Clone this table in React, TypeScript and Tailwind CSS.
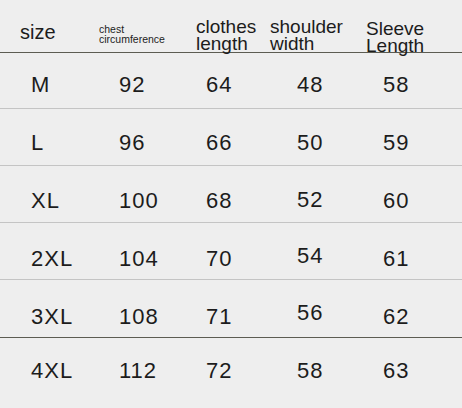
const rows = [
  { size: "M", chest: "92", length: "64", shoulder: "48", sleeve: "58", row: "h-[56px] pt-[21px] border-[#c4c4c4]", lift: "" },
  { size: "L", chest: "96", length: "66", shoulder: "50", sleeve: "59", row: "h-[57px] pt-[23px] border-[#c4c4c4]", lift: "" },
  { size: "XL", chest: "100", length: "68", shoulder: "52", sleeve: "60", row: "h-[57px] pt-[24px] border-[#c4c4c4]", lift: "-mt-[1px]" },
  { size: "2XL", chest: "104", length: "70", shoulder: "54", sleeve: "61", row: "h-[57px] pt-[25px] border-[#c4c4c4]", lift: "-mt-[3px]" },
  { size: "3XL", chest: "108", length: "71", shoulder: "56", sleeve: "62", row: "h-[58px] pt-[26px] border-[#5c5c52]", lift: "-mt-[4px]" },
  { size: "4XL", chest: "112", length: "72", shoulder: "58", sleeve: "63", row: "h-[70px] pt-[22px] border-transparent", lift: "" },
]

function Stacked({ top, bottom, className }: { top: string; bottom: string; className: string }) {
  return (
    <div className={className}>
      <div>{top}</div>
      <div>{bottom}</div>
    </div>
  )
}

export default function App() {
  return (
    <div
      className="h-[408px] w-[462px] overflow-hidden bg-[#eeeeee] text-[#1c1c1c]"
      style={{ fontFamily: '"Liberation Sans", Arial, sans-serif' }}
    >
      {/* header */}
      <div className="grid h-[53px] grid-cols-[99px_97px_74px_96px_96px] items-start border-b border-[#5c5c52]">
        <div className="pl-[20px] pt-[22px] text-[20px] leading-[20px]">size</div>
        <Stacked top="chest" bottom="circumference" className="pt-[25px] text-[10.5px] leading-[9.5px]" />
        <Stacked top="clothes" bottom="length" className="pt-[18px] text-[19px] leading-[17px]" />
        <Stacked top="shoulder" bottom="width" className="pt-[18px] text-[19px] leading-[17px]" />
        <Stacked top="Sleeve" bottom="Length" className="pt-[20px] text-[19px] leading-[17px]" />
      </div>

      {rows.map((r) => (
        <div
          key={r.size}
          className={`grid grid-cols-[99px_97px_74px_96px_96px] items-start border-b text-[22px] leading-[22px] tracking-[1px] ${r.row}`}
        >
          <div className="pl-[31px]">{r.size}</div>
          <div className="pl-[20px]">{r.chest}</div>
          <div className="pl-[10px]">{r.length}</div>
          <div className={`pl-[27px] ${r.lift}`}>{r.shoulder}</div>
          <div className="pl-[17px]">{r.sleeve}</div>
        </div>
      ))}
    </div>
  )
}
